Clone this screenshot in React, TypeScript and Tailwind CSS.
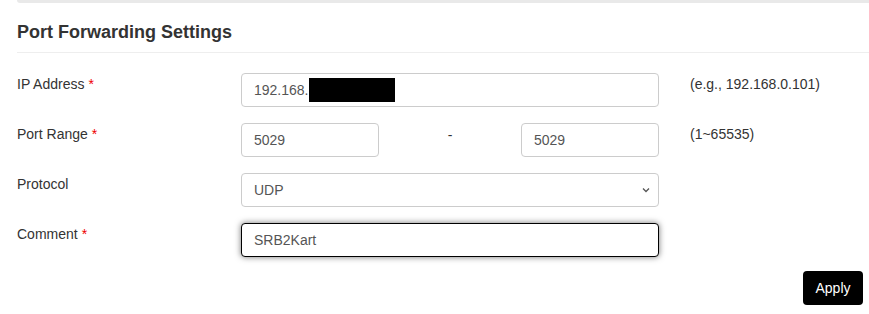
import React from "react";

const font = { fontFamily: '"Liberation Sans", Arial, sans-serif' };

const Req = () => <span className="text-[#e00] ml-1">*</span>;

const Box = ({ children, className = "" }: { children?: React.ReactNode; className?: string }) => (
  <div
    className={`h-[34px] flex items-center px-3 text-[14px] text-[#555] bg-white border border-[#ccc] rounded ${className}`}
  >
    {children}
  </div>
);

const Row = ({ label, req, children, hint }: { label: string; req?: boolean; children: React.ReactNode; hint?: string }) => (
  <div className="flex h-[50px]">
    <div className="w-[224px] pt-[1px] text-[14px] text-[#333]">
      {label}
      {req && <Req />}
    </div>
    <div className="w-[418px]">{children}</div>
    <div className="pl-[31px] pt-[1px] text-[14px] text-[#333]">{hint}</div>
  </div>
);

export default function App() {
  return (
    <div className="w-[869px] h-[314px] bg-white overflow-hidden" style={font}>
      <div className="ml-[17px] h-[3px] bg-[#e9e9e9] rounded-bl" />
      <div className="pl-[17px]">
        <div className="h-[50px] border-b border-[#eee] flex items-end pb-[9px]">
          <h2 className="text-[18px] leading-[22px] font-bold text-[#333]">Port Forwarding Settings</h2>
        </div>
        <div className="pt-[20px]">
          <Row label="IP Address" req hint="(e.g., 192.168.0.101)">
            <Box>
              <span>192.168.</span>
              <span className="inline-block w-[86px] h-[24px] bg-black" />
            </Box>
          </Row>
          <Row label="Port Range" req hint="(1~65535)">
            <div className="flex items-start justify-between">
              <Box className="w-[138px]">5029</Box>
              <span className="pt-[2px] text-[14px] text-[#333]">-</span>
              <Box className="w-[138px]">5029</Box>
            </div>
          </Row>
          <Row label="Protocol">
            <Box className="justify-between pr-[7px]">
              <span>UDP</span>
              <svg width="10" height="10" viewBox="0 0 10 10" fill="none" stroke="#555" strokeWidth="1.3">
                <path d="M2 3.5 L5 6.5 L8 3.5" />
              </svg>
            </Box>
          </Row>
          <Row label="Comment" req>
            <div className="h-[34px] flex items-center px-3 text-[14px] text-[#555] bg-white border border-black rounded shadow-[0_0_6px_rgba(0,0,0,0.55)]">
              SRB2Kart
            </div>
          </Row>
        </div>
        <div className="flex justify-end pr-[6px] -mt-[2px]">
          <button className="h-[34px] w-[60px] bg-black text-white text-[14px] rounded">Apply</button>
        </div>
      </div>
    </div>
  );
}
